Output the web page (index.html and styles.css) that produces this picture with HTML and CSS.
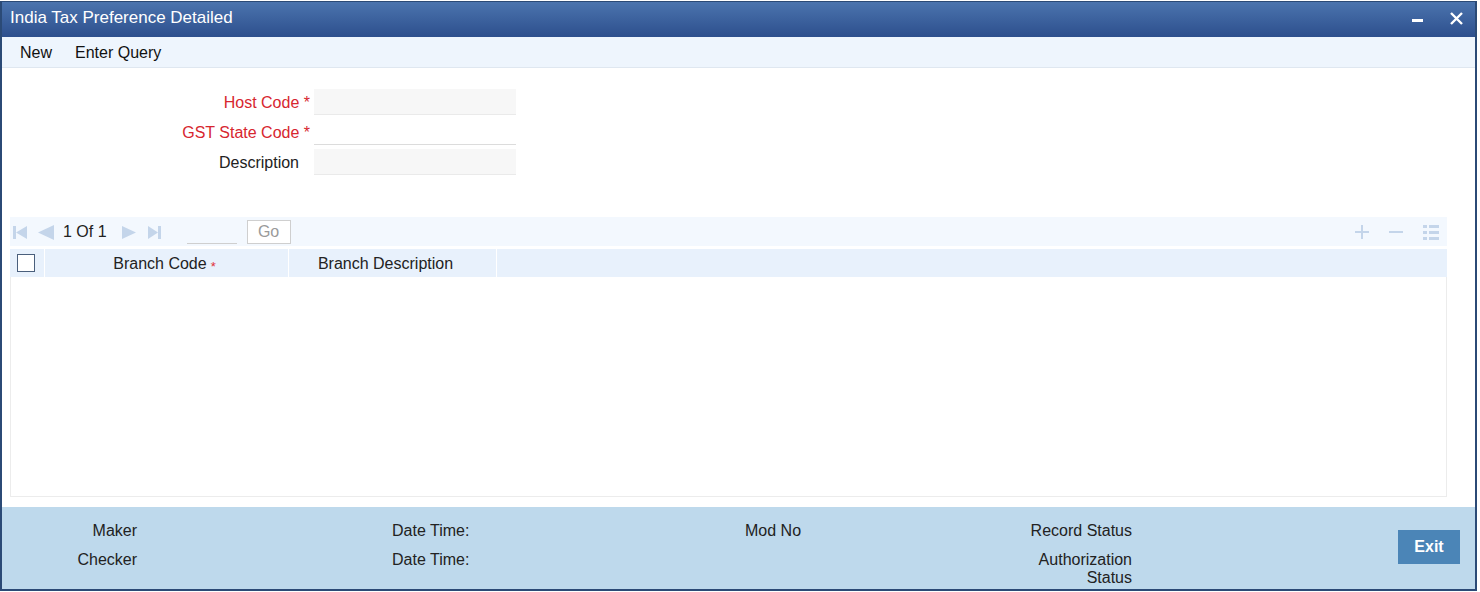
FILE: index.html
```html
<!DOCTYPE html>
<html lang="en">

<head>
    <meta charset="UTF-8">
    <title>India Tax Preference Detailed</title>
    <link rel="stylesheet" href="styles.css">
</head>

<body>
    <div class="window">
        <div class="title-bar">
            <h1 class="title">India Tax Preference Detailed</h1>
            <div class="win-controls">
                <span class="win-min"></span>
                <svg class="win-close" width="13" height="13" viewBox="0 0 13 13">
                    <path d="M1 1 L12 12 M12 1 L1 12" stroke="#fff" stroke-width="2.4" />
                </svg>
            </div>
        </div>

        <div class="menu-bar">
            <span class="menu-item">New</span>
            <span class="menu-item">Enter Query</span>
        </div>

        <div class="content">
            <div class="form">
                <label class="field-label required">Host Code <span class="star">*</span></label>
                <div class="field-input shaded"></div>

                <label class="field-label required">GST State Code <span class="star">*</span></label>
                <div class="field-input"></div>

                <label class="field-label">Description</label>
                <div class="field-input shaded"></div>
            </div>

            <div class="grid-block">
                <div class="grid-toolbar">
                    <div class="pager">
                        <svg width="15" height="15" viewBox="0 0 15 15">
                            <rect x="0" y="1" width="3" height="13" fill="#c4d5ea" />
                            <path d="M14 1 L3 7.5 L14 14 Z" fill="#c4d5ea" />
                        </svg>
                        <svg class="pg-prev" width="16" height="15" viewBox="0 0 16 15">
                            <path d="M16 0 L0 7.5 L16 15 Z" fill="#c4d5ea" />
                        </svg>
                        <span class="pg-text">1 Of 1</span>
                        <svg class="pg-next" width="14" height="13" viewBox="0 0 14 13">
                            <path d="M0 0 L14 6.5 L0 13 Z" fill="#c4d5ea" />
                        </svg>
                        <svg class="pg-last" width="13" height="13" viewBox="0 0 13 13">
                            <path d="M0 0 L10 6.5 L0 13 Z" fill="#c4d5ea" />
                            <rect x="10" y="0" width="3" height="13" fill="#c4d5ea" />
                        </svg>
                        <span class="pg-input"></span>
                        <button class="go-btn">Go</button>
                    </div>
                    <div class="grid-actions">
                        <svg width="14" height="14" viewBox="0 0 14 14">
                            <path d="M7 0 V14 M0 7 H14" stroke="#c4d5ea" stroke-width="2" />
                        </svg>
                        <svg width="14" height="14" viewBox="0 0 14 14">
                            <path d="M0 7 H14" stroke="#c4d5ea" stroke-width="2" />
                        </svg>
                        <svg width="16" height="15" viewBox="0 0 16 15">
                            <g fill="#c4d5ea">
                                <rect x="0" y="0" width="4" height="3" />
                                <rect x="6" y="0" width="10" height="3" />
                                <rect x="0" y="6" width="4" height="3" />
                                <rect x="6" y="6" width="10" height="3" />
                                <rect x="0" y="12" width="4" height="3" />
                                <rect x="6" y="12" width="10" height="3" />
                            </g>
                        </svg>
                    </div>
                </div>

                <div class="grid-head">
                    <div class="cell cell-check"><span class="checkbox"></span></div>
                    <div class="cell cell-code">Branch Code <span class="mini-star">*</span></div>
                    <div class="cell cell-desc">Branch Description</div>
                    <div class="cell cell-rest"></div>
                </div>
                <div class="grid-body"></div>
            </div>
        </div>

        <div class="footer">
            <div class="f-label">Maker</div>
            <div></div>
            <div class="f-text">Date Time:</div>
            <div class="f-text">Mod No</div>
            <div class="f-label">Record Status</div>
            <div></div>
            <button class="exit-btn">Exit</button>

            <div class="f-label">Checker</div>
            <div></div>
            <div class="f-text">Date Time:</div>
            <div></div>
            <div class="f-label">Authorization<br>Status</div>
            <div></div>
        </div>
    </div>
</body>

</html>
```

FILE: styles.css
```css
*,
*::after,
*::before {
    margin: 0;
    padding: 0;
    box-sizing: border-box;
}

body {
    font-family: "Liberation Sans", Arial, sans-serif;
    font-size: 16px;
    color: #222;
    background-color: #fff;
}

.window {
    width: 1477px;
    height: 590px;
    margin-top: 1px;
    border: 2px solid #2b4a76;
    border-top-width: 1px;
    display: flex;
    flex-direction: column;
    background-color: #fff;
}

/* title bar */
.title-bar {
    height: 35px;
    background: linear-gradient(#4b74ae, #2d4f8d);
    display: flex;
    justify-content: space-between;
    align-items: center;
    padding: 0 12px 0 8px;
}

.title {
    color: #fff;
    font-size: 17px;
    font-weight: 400;
    margin-top: -3px;
}

.win-controls {
    display: flex;
    align-items: center;
    gap: 27px;
    margin-top: -2px;
}

.win-min {
    display: block;
    width: 11px;
    height: 3px;
    background-color: #fff;
    margin-top: 4px;
}

/* menu */
.menu-bar {
    height: 31px;
    background-color: #eef5fd;
    border-bottom: 1px solid #dfe7f0;
    display: flex;
    align-items: center;
    padding: 2px 0 0 18px;
    gap: 23px;
}

.menu-item {
    font-size: 16px;
    color: #111;
}

.content {
    flex: 1;
    display: flex;
    flex-direction: column;
}

/* form */
.form {
    display: grid;
    grid-template-columns: 309px 202px;
    column-gap: 3px;
    row-gap: 4px;
    padding-top: 21px;
    align-items: center;
}

.field-label {
    text-align: right;
    padding: 2px 12px 0 0;
    font-size: 16px;
    color: #222;
}

.field-label.required {
    color: #d7262f;
    padding-right: 1px;
}

.star {
    color: #d7262f;
}

.field-input {
    height: 26px;
    border-bottom: 1px solid #dcdcdc;
    background-color: #fff;
}

.field-input.shaded {
    background-color: #f7f7f7;
    border-bottom-color: #eaeaea;
}

/* grid */
.grid-block {
    margin: 42px 28px 0 8px;
    display: flex;
    flex-direction: column;
}

.grid-toolbar {
    height: 29px;
    background-color: #f3f8fe;
    display: flex;
    justify-content: space-between;
    align-items: center;
    padding: 1px 8px 0 3px;
}

.pager {
    display: flex;
    align-items: center;
}

.pg-prev {
    margin-left: 10px;
}

.pg-text {
    margin-left: 9px;
    font-size: 16px;
    color: #222;
}

.pg-next {
    margin-left: 15px;
}

.pg-last {
    margin-left: 12px;
}

.pg-input {
    display: block;
    width: 50px;
    height: 24px;
    margin-left: 26px;
    border-bottom: 1px solid #cfcfcf;
}

.go-btn {
    margin-left: 10px;
    width: 44px;
    height: 24px;
    border: 1px solid #cfcfcf;
    background-color: #fff;
    color: #9a9a9a;
    font-family: inherit;
    font-size: 16px;
}

.grid-actions {
    display: flex;
    align-items: center;
    gap: 20px;
}

.grid-head {
    margin-top: 3px;
    height: 28px;
    display: flex;
    background-color: #e8f1fc;
}

.cell {
    display: flex;
    align-items: center;
    justify-content: center;
    border-right: 1px solid #fff;
    padding-top: 2px;
    font-size: 16px;
    color: #222;
}

.cell-check {
    width: 35px;
    justify-content: flex-start;
    padding: 0 0 0 7px;
}

.checkbox {
    display: block;
    width: 18px;
    height: 18px;
    border: 1px solid #4a5f7c;
    background-color: #fff;
}

.cell-code {
    width: 244px;
    padding-right: 4px;
}

.mini-star {
    color: #e0303a;
    font-size: 13px;
    margin-left: 4px;
    margin-top: 4px;
}

.cell-desc {
    width: 208px;
    padding-right: 14px;
}

.cell-rest {
    flex: 1;
    border-right: none;
}

.grid-body {
    height: 220px;
    border: 1px solid #ececec;
    border-top: none;
}

/* footer */
.footer {
    height: 82px;
    background-color: #bed9ec;
    display: grid;
    grid-template-columns: 135px 255px 353px 155px 232px 266px 62px;
    grid-template-rows: 18px 36px;
    row-gap: 11px;
    padding-top: 15px;
    font-size: 16px;
    line-height: 18px;
    color: #222;
}

.f-label {
    text-align: right;
}

.exit-btn {
    grid-column: 7;
    grid-row: 1 / span 2;
    align-self: start;
    margin-top: 8px;
    height: 34px;
    width: 62px;
    border: none;
    background-color: #4b85b7;
    color: #fff;
    font-family: inherit;
    font-size: 16px;
    font-weight: 700;
}
```
